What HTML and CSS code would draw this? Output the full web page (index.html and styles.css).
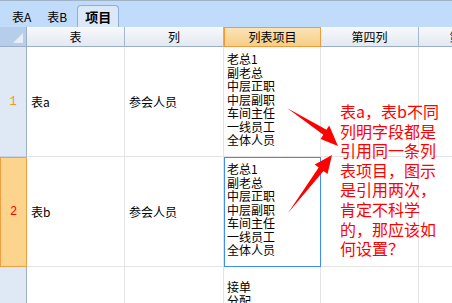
FILE: index.html
```html
<!DOCTYPE html>
<html lang="zh">
<head>
<meta charset="utf-8">
<link rel="stylesheet" href="styles.css">
</head>
<body>
<div class="app">
  <div class="tabbar">
    <div class="tab">表A</div>
    <div class="tab">表B</div>
    <div class="tab active">项目</div>
  </div>
  <div class="grid">
    <div class="corner"><span class="tri"></span></div>
    <div class="colhead">表</div>
    <div class="colhead">列</div>
    <div class="colhead sel">列表项目</div>
    <div class="colhead">第四列</div>
    <div class="colhead">第五列</div>

    <div class="rowhead">1</div>
    <div class="cell mid">表a</div>
    <div class="cell mid">参会人员</div>
    <div class="cell list">老总1<br>副老总<br>中层正职<br>中层副职<br>车间主任<br>一线员工<br>全体人员</div>
    <div class="cell"></div>
    <div class="cell"></div>

    <div class="rowhead selrow">2</div>
    <div class="cell mid">表b</div>
    <div class="cell mid">参会人员</div>
    <div class="cell list active">老总1<br>副老总<br>中层正职<br>中层副职<br>车间主任<br>一线员工<br>全体人员</div>
    <div class="cell"></div>
    <div class="cell"></div>

    <div class="rowhead"></div>
    <div class="cell"></div>
    <div class="cell"></div>
    <div class="cell list third">接单<br>分配</div>
    <div class="cell"></div>
    <div class="cell"></div>
  </div>

  <svg class="arrows" width="452" height="303" viewBox="0 0 452 303">
    <polygon points="287,108 326.5,129.8 329.2,125.6 338,146 320.6,139 323.3,134.8" fill="#ff0000"/>
    <polygon points="288,213 318.7,167.5 314.7,164.5 332,155 327.5,174.1 323.5,171.1" fill="#ff0000"/>
  </svg>
  <div class="note">表a，表b不同<br>列明字段都是<br>引用同一条列<br>表项目，图示<br>是引用两次，<br>肯定不科学<br>的，那应该如<br>何设置？</div>
</div>
</body>
</html>
```
FILE: styles.css
```css
html, body {
  margin: 0;
  padding: 0;
  background: #ffffff;
  overflow: hidden;
}
.app {
  position: relative;
  width: 452px;
  height: 303px;
  overflow: hidden;
  font-family: "Noto Sans CJK SC", "Liberation Sans", sans-serif;
  font-size: 12px;
  color: #000;
}
.tabbar {
  height: 26px;
  background: #c1dbfa;
  border-top: 1px solid #9fb2c6;
  display: flex;
  align-items: flex-end;
  padding-left: 4px;
  box-sizing: content-box;
}
.tab {
  height: 21px;
  line-height: 21px;
  padding: 0 8px;
  font-size: 12px;
  color: #000;
}
.tab.active {
  margin-left: 2px;
  width: 40px;
  padding: 0;
  text-align: center;
  background: #dbe8f8;
  border: 1px solid #8faed2;
  border-bottom: none;
  border-radius: 4px 4px 0 0;
  font-weight: bold;
  font-size: 13px;
}
.grid {
  display: grid;
  width: 517px;
  grid-template-columns: 27px 98px 99px 97px 98px 98px;
  grid-template-rows: 20px 110px 110px 60px;
}
.corner {
  position: relative;
  background: #b6cdeb;
  border-right: 1px solid #9bb0c8;
  border-bottom: 1px solid #9bb0c8;
  box-sizing: border-box;
}
.tri {
  position: absolute;
  right: 3px;
  bottom: 3px;
  width: 0;
  height: 0;
  border-left: 10px solid transparent;
  border-bottom: 10px solid #e8eef6;
}
.colhead {
  background: linear-gradient(#f7f9fb, #e3e9f1);
  border-right: 1px solid #a5b8ce;
  border-bottom: 1px solid #9bb0c8;
  box-sizing: border-box;
  text-align: center;
  line-height: 19px;
  white-space: nowrap;
  overflow: hidden;
}
.colhead.sel {
  background: linear-gradient(#fbe3b4, #f7cd86);
  border: 1px solid #f09a3a;
  line-height: 17px;
}
.rowhead {
  background: #dfe8f5;
  border-right: 1px solid #9bb0c8;
  border-bottom: 1px solid #c8d4e4;
  box-sizing: border-box;
  display: flex;
  align-items: center;
  justify-content: center;
  color: #f09a10;
  font-family: "Liberation Mono", monospace;
  font-size: 12px;
}
.rowhead.selrow {
  background: #fdd48c;
  border: 1px solid #f0a040;
  color: #ff0000;
}
.cell {
  border-right: 1px solid #e4e4e4;
  border-bottom: 1px solid #e4e4e4;
  box-sizing: border-box;
  padding-left: 4px;
}
.cell.mid {
  display: flex;
  align-items: center;
}
.cell.list {
  padding-top: 5px;
  line-height: 13.5px;
  padding-left: 3px;
}
.cell.list.active {
  border: 1px solid #3c8ef0;
  padding-top: 4px;
  padding-left: 2px;
}
.cell.list.third {
  padding-top: 13px;
}
.arrows {
  position: absolute;
  left: 0;
  top: 0;
}
.note {
  position: absolute;
  left: 340px;
  top: 102px;
  color: #ff0000;
  font-size: 16px;
  line-height: 19.6px;
  white-space: nowrap;
}
```
